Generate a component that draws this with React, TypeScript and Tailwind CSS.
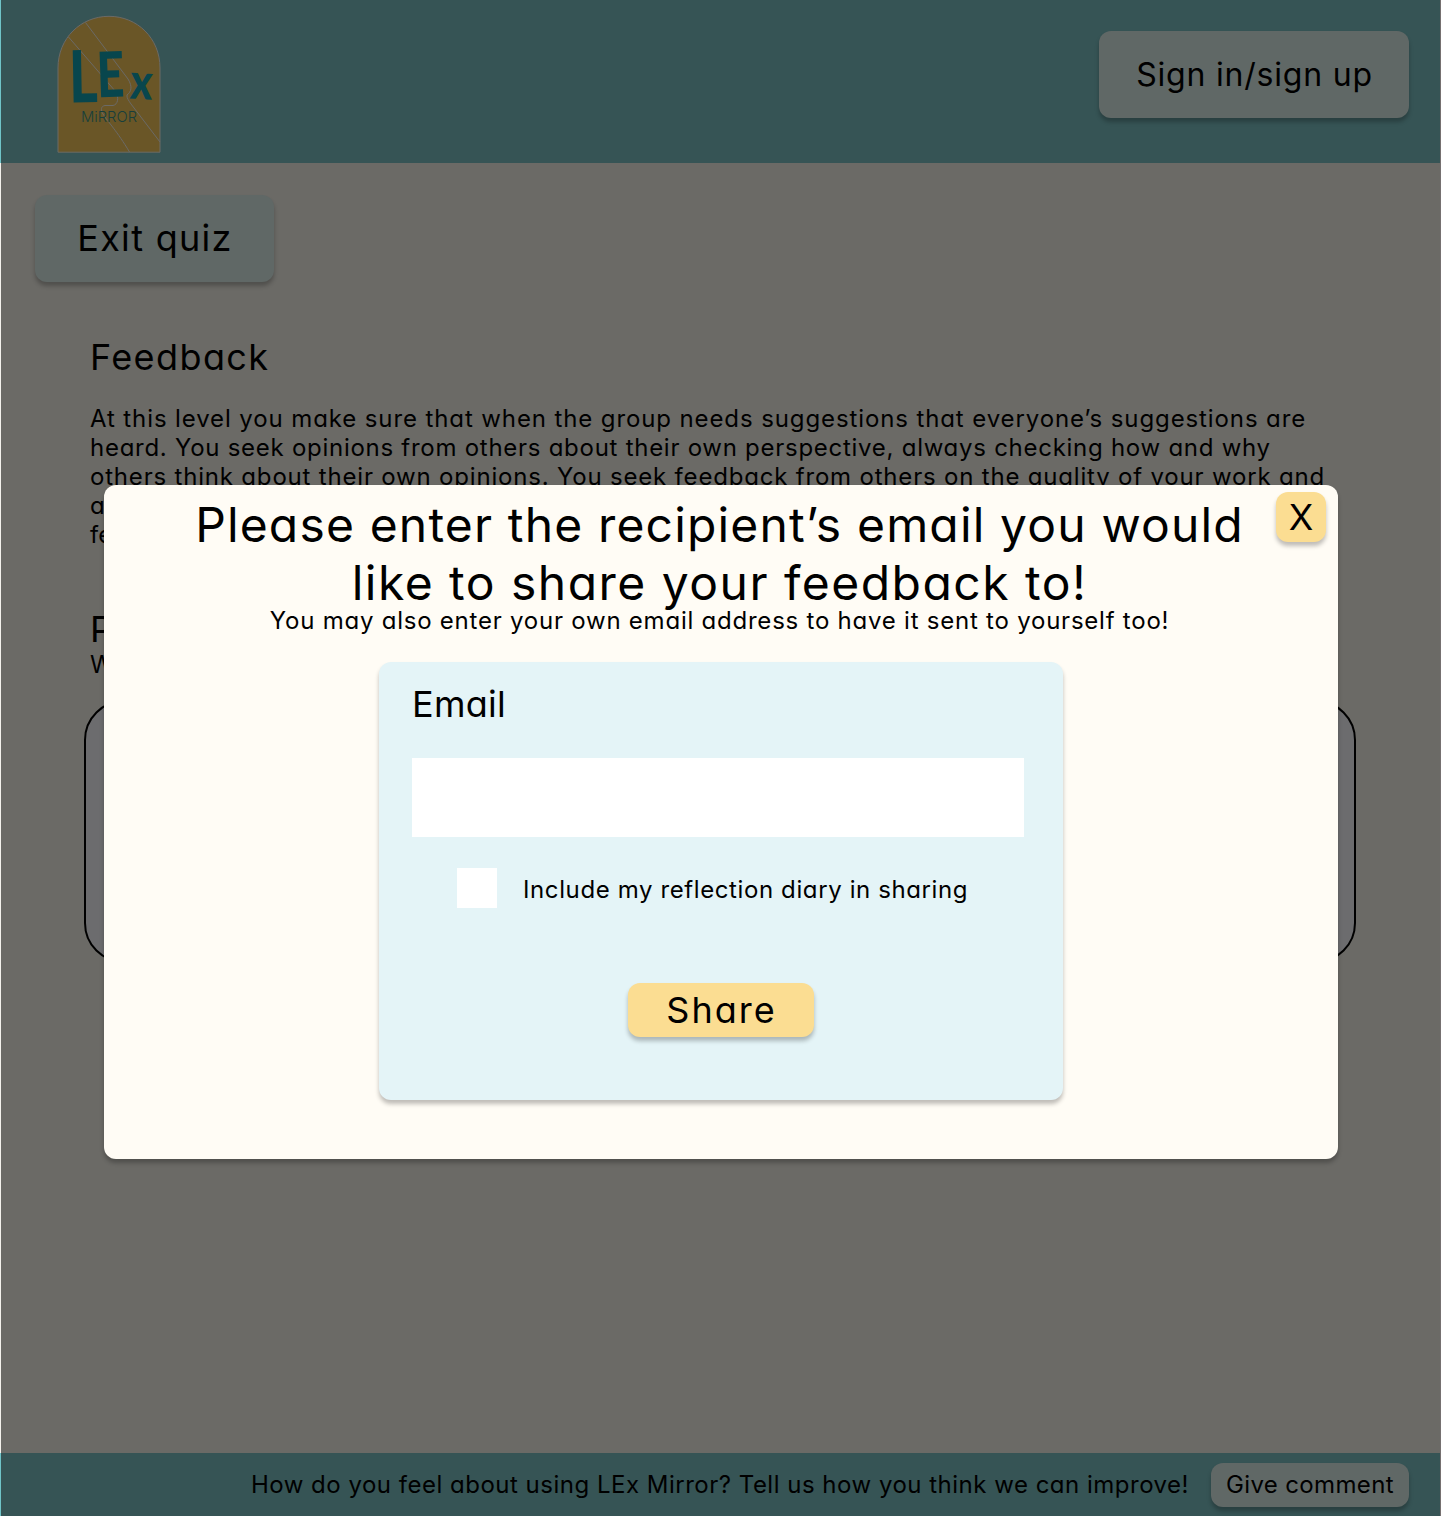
function Logo() {
  return (
    <svg
      className="mt-[15px] ml-[57px] h-[138px] w-[104px] shrink-0"
      viewBox="57 15 104 138"
      role="img"
      aria-label="LEx Mirror"
    >
      <path
        d="M58 152.2V68C58 38 81 16.3 109 16.3S160 38 160 68V152.2Z"
        fill="#6a5627"
        stroke="#6b6a66"
        strokeWidth="1"
      />
      <g fill="none" stroke="#6b6a66" strokeWidth="1">
        <path d="M68.5 37L116 92C119 98 118 104.5 113 105.5H105C101 106 100.5 110 103 114C108 122 117 131 129.5 152" />
        <path d="M85.5 22.5L128 79C133 87 131 92 127 95C126.5 98 129 101 131 104L160 142" />
      </g>
      <g fill="#08464d" fontFamily="Lato, sans-serif" fontWeight="900">
        <text transform="translate(69.5 102.5) rotate(-1) scale(0.76 1)" fontSize="72">L</text>
        <text transform="translate(97.5 97.5) rotate(-2) scale(0.76 1)" fontSize="63">E</text>
        <text transform="translate(129.5 98.5) rotate(3) scale(0.84 1)" fontSize="50">x</text>
      </g>
      <text
        x="81"
        y="122"
        fill="#173f3b"
        fontFamily="Inter, sans-serif"
        fontWeight="300"
        fontSize="14.5"
        textLength="56"
        lengthAdjust="spacingAndGlyphs"
      >
        MiRROR
      </text>
    </svg>
  );
}

function Header() {
  return (
    <header className="flex h-[163px] items-start justify-between border-l border-[#70c4c8] bg-[#365455] pr-[31px]">
      <div className="-ml-px">
        <Logo />
      </div>
      <button className="mt-[31px] flex h-[87px] w-[310px] items-center justify-center rounded-xl bg-[#606866] pl-px text-[32px] leading-[39px] tracking-[0.8px] whitespace-nowrap shadow-[0_4px_4px_rgba(0,0,0,0.25)]">
        Sign in/sign up
      </button>
    </header>
  );
}

function Footer() {
  return (
    <footer className="flex h-[63px] items-center justify-end border-l border-[#70c4c8] bg-[#365455] pr-[31px] text-2xl leading-[29px]">
      <p className="-mt-px mr-[22px] tracking-[0.5px] whitespace-nowrap">
        How do you feel about using LEx Mirror? Tell us how you think we can improve!
      </p>
      <button className="flex h-11 w-[198px] items-center justify-center rounded-xl bg-[#606866] pb-px tracking-[0.36px] whitespace-nowrap shadow-[0_4px_4px_rgba(0,0,0,0.25)]">
        Give comment
      </button>
    </footer>
  );
}

function QuizFeedback() {
  return (
    <main className="flex flex-1 flex-col items-start border-l border-[#f3f1ec] pl-[33px]">
      <button className="mt-8 ml-px flex h-[87px] w-[239px] items-center justify-center rounded-xl bg-[#606866] pb-[2px] pl-px text-4xl leading-[44px] tracking-[1.3px] whitespace-nowrap shadow-[0_4px_4px_rgba(0,0,0,0.25)]">
        Exit quiz
      </button>
      <section className="mt-[53px] ml-[56px]">
        <h1 className="text-4xl leading-[44px] tracking-[1.4px]">Feedback</h1>
        <div className="mt-[25px] text-2xl leading-[29px] whitespace-nowrap">
          <p className="tracking-[0.89px]">
            At this level you make sure that when the group needs suggestions that everyone’s suggestions are
          </p>
          <p className="tracking-[0.73px]">
            heard. You seek opinions from others about their own perspective, always checking how and why
          </p>
          <p className="tracking-[0.81px]">
            others think about their own opinions. You seek feedback from others on the quality of your work and
          </p>
          <p>a</p>
          <p>fe</p>
        </div>
        <h2 className="mt-[60px] text-4xl leading-[41px]">P</h2>
        <p className="text-2xl leading-[29px]">W</p>
      </section>
      <div className="mt-[21px] ml-[50px] h-[263px] w-[1272px] rounded-[40px] border-2 border-black bg-[#6c6c6e]" />
    </main>
  );
}

function ShareDialog() {
  return (
    <div
      role="dialog"
      className="absolute top-[485px] left-[104px] flex h-[674px] w-[1234px] flex-col items-center rounded-xl bg-[#fffcf5] pt-[11px] shadow-[0_4px_4px_rgba(0,0,0,0.25)]"
    >
      <button className="absolute top-[7px] right-3 flex size-[50px] items-center justify-center rounded-xl bg-[#fbdd92] text-4xl leading-[44px] shadow-[0_4px_4px_rgba(0,0,0,0.25)]">
        X
      </button>
      <h2 className="pr-[3px] text-center text-5xl leading-[58px] whitespace-nowrap">
        <span className="block tracking-[1.16px]">Please enter the recipient’s email you would</span>
        <span className="block tracking-[1.48px]">like to share your feedback to!</span>
      </h2>
      <p className="-mt-[6px] pr-[3px] text-2xl leading-[29px] tracking-[0.77px] whitespace-nowrap">
        You may also enter your own email address to have it sent to yourself too!
      </p>
      <form className="mt-[27px] flex h-[438px] w-[684px] flex-col rounded-xl bg-[#e4f4f7] px-[33px] pt-5 shadow-[0_4px_4px_rgba(0,0,0,0.25)]">
        <label htmlFor="email" className="text-4xl leading-[44px] tracking-[0.25px]">
          Email
        </label>
        <input id="email" className="mt-8 h-[79px] w-[612px] bg-white" />
        <label className="mt-[31px] ml-[45px] flex items-center text-2xl leading-[29px] tracking-[0.61px] whitespace-nowrap">
          <input type="checkbox" className="mr-[26px] size-10 appearance-none bg-white" />
          <span className="mt-[3px]">Include my reflection diary in sharing</span>
        </label>
        <button
          type="button"
          className="mt-[75px] flex h-[54px] w-[186px] items-center justify-center self-center rounded-xl bg-[#fbdd92] pl-px text-4xl leading-[44px] tracking-[2px] shadow-[0_4px_4px_rgba(0,0,0,0.25)]"
        >
          Share
        </button>
      </form>
    </div>
  );
}

export default function App() {
  return (
    <div className="relative flex h-[1516px] w-[1441px] flex-col overflow-hidden border-r border-[#757070] bg-[#6b6a66] font-[Inter,sans-serif] font-normal text-black [font-feature-settings:'cv11']">
      <Header />
      <QuizFeedback />
      <Footer />
      <ShareDialog />
    </div>
  );
}
